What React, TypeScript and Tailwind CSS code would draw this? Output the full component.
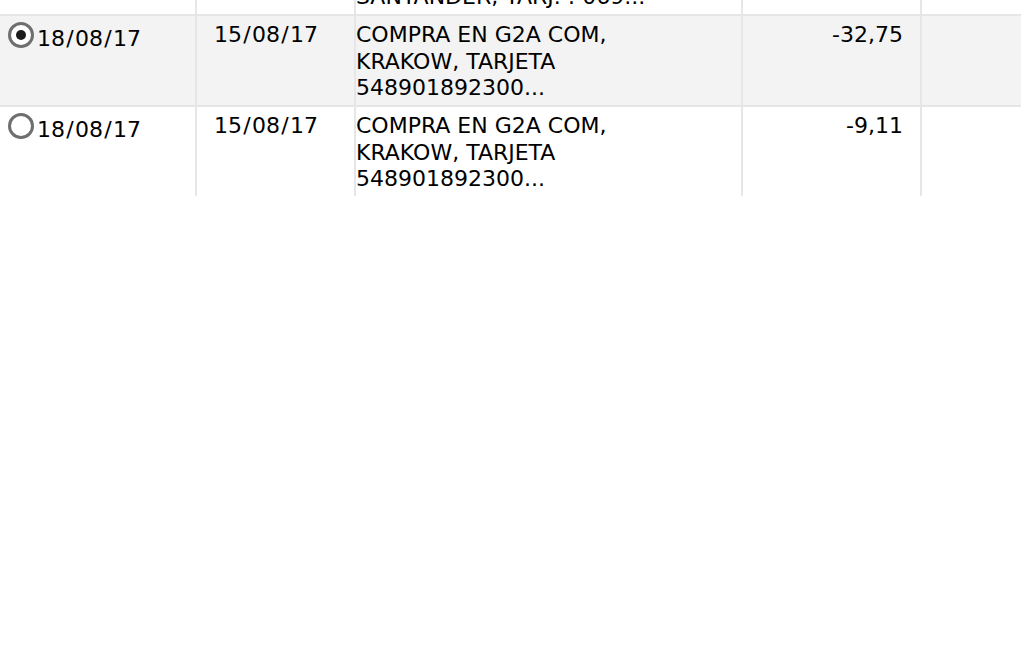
import React from 'react';

type Row = {
  fecha: string;
  valor: string;
  concepto: string[];
  importe: string;
  selected?: boolean;
  shaded?: boolean;
};

const rows: Row[] = [
  {
    fecha: '18/08/17',
    valor: '17/08/17',
    concepto: ['TRANSFERENCIA', 'RECIBIDA BANCO', 'SANTANDER, TARJ. : 069...'],
    importe: '-15,00',
  },
  {
    fecha: '18/08/17',
    valor: '15/08/17',
    concepto: ['COMPRA EN G2A COM,', 'KRAKOW, TARJETA', '548901892300...'],
    importe: '-32,75',
    selected: true,
    shaded: true,
  },
  {
    fecha: '18/08/17',
    valor: '15/08/17',
    concepto: ['COMPRA EN G2A COM,', 'KRAKOW, TARJETA', '548901892300...'],
    importe: '-9,11',
  },
];

// the slash in the original font is a bit wider than DejaVu's
function DateText({ value }: { value: string }) {
  const parts = value.split('/');
  return (
    <span className="whitespace-nowrap">
      {parts.map((p, i) => (
        <React.Fragment key={i}>
          {i > 0 && <span className="mx-[1.3px]">/</span>}
          {p}
        </React.Fragment>
      ))}
    </span>
  );
}

function Radio({ checked }: { checked?: boolean }) {
  return (
    <span className="flex h-[26px] w-[26px] shrink-0 items-center justify-center rounded-full border-[3px] border-[#6f6f6f] bg-white">
      {checked && <span className="h-[10px] w-[10px] rounded-full bg-[#1c1c1c]" />}
    </span>
  );
}

export default function App() {
  return (
    <div className="min-h-[649px] overflow-hidden bg-white font-['DejaVu_Sans',Verdana,sans-serif] text-[22px] leading-[26.6px] text-black">
      <div className="-mt-[75px] w-[1021px]">
        {rows.map((r, i) => (
          <div
            key={i}
            className={
              'grid grid-cols-[197px_159px_387px_179px_99px] ' +
              (i < rows.length - 1 ? 'h-[91px] border-b-2 border-[#e6e6e6] ' : 'h-[89px] ') +
              (r.shaded ? 'bg-[#f3f3f3]' : 'bg-white')
            }
          >
            <div className="flex items-start gap-[3px] border-r-2 border-[#e6e6e6] pl-[8px] pt-[6px]">
              <Radio checked={r.selected} />
              <span className="mt-[4px]">
                <DateText value={r.fecha} />
              </span>
            </div>
            <div className="border-r-2 border-[#e6e6e6] pl-[17px] pt-[6px]">
              <DateText value={r.valor} />
            </div>
            <div className="border-r-2 border-[#e6e6e6] pt-[6px]">
              {r.concepto.map((l, j) => (
                <div key={j} className="whitespace-nowrap">
                  {l}
                </div>
              ))}
            </div>
            <div className="border-r-2 border-[#e6e6e6] pr-[17px] pt-[6px] text-right">{r.importe}</div>
            <div />
          </div>
        ))}
      </div>
    </div>
  );
}
